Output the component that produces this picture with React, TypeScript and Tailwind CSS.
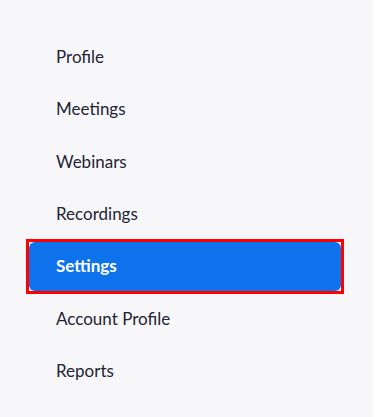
const items = [
  "Profile",
  "Meetings",
  "Webinars",
  "Recordings",
  "Settings",
  "Account Profile",
  "Reports",
];

function NavItem({ label, active }: { label: string; active?: boolean }) {
  if (active) {
    return (
      <div className="-mx-[3px] -my-[3px] border-[3px] border-[#ff0000] bg-white">
        <div className="flex h-[49px] items-center rounded-[6px] bg-[#0e72ed] pl-[27px] text-[17px] font-bold text-white">
          {label}
        </div>
      </div>
    );
  }
  return (
    <div className="flex h-[49px] items-center pl-[27px] text-[17px] text-[#232333]">
      {label}
    </div>
  );
}

export default function App() {
  return (
    <div className="h-[417px] w-[377px] bg-white" style={{ fontFamily: "Lato, 'Open Sans', sans-serif" }}>
      <div className="h-full w-[373px] bg-[#f7f7fa] pl-[29px] pr-[32px] pt-[32px]">
        <nav className="flex flex-col gap-[3.4px]">
          {items.map((label) => (
            <NavItem key={label} label={label} active={label === "Settings"} />
          ))}
        </nav>
      </div>
    </div>
  );
}
